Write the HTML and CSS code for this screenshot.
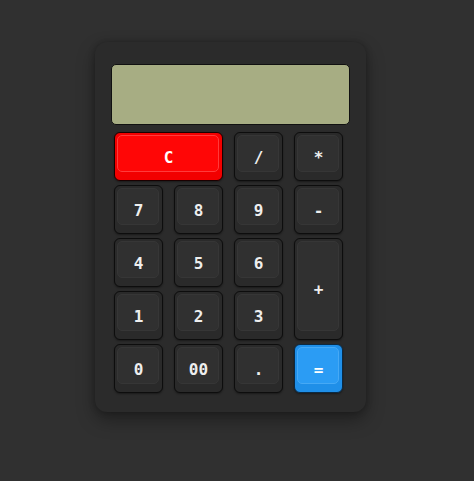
FILE: index.html
```html
<!DOCTYPE html>
<html lang="en">
	<head>
		<meta charset="UTF-8">
		<title>Calculator</title>
		<link rel="stylesheet" href="styles.css">
	</head>
	<body>

		<div class="calc">
			<div class="screen"></div>
			<div class="keys">
				<button class="key red wide">C</button>
				<button class="key">/</button>
				<button class="key">*</button>
				<button class="key">7</button>
				<button class="key">8</button>
				<button class="key">9</button>
				<button class="key">-</button>
				<button class="key">4</button>
				<button class="key">5</button>
				<button class="key">6</button>
				<button class="key tall">+</button>
				<button class="key">1</button>
				<button class="key">2</button>
				<button class="key">3</button>
				<button class="key">0</button>
				<button class="key">00</button>
				<button class="key">.</button>
				<button class="key blue">=</button>
			</div>
		</div>

	</body>
</html>
```

FILE: styles.css
```css
* {
	margin: 0;
	padding: 0;
	box-sizing: border-box;
}

body {
	background: #303030;
	height: 481px;
	overflow: hidden;
}

.calc {
	width: 271px;
	margin: 42px 0 0 95px;
	padding: 22px 16px 19px 16px;
	background: #2b2b2b;
	border-radius: 12px;
	box-shadow: 0 8px 18px rgba(0, 0, 0, 0.35), 0 0 6px rgba(0, 0, 0, 0.25);
}

.screen {
	height: 61px;
	background: #a7ad83;
	border: 1px solid #111;
	border-radius: 5px;
}

.keys {
	display: grid;
	grid-template-columns: repeat(4, 49px);
	grid-auto-rows: 49px;
	column-gap: 11px;
	row-gap: 4px;
	margin: 7px 0 0 3px;
}

.key {
	position: relative;
	isolation: isolate;
	display: flex;
	align-items: center;
	justify-content: center;
	padding-top: 1px;
	background: #2a2a2a;
	border: 1px solid #0d0d0d;
	border-radius: 6px;
	color: #eee;
	font-family: "DejaVu Sans Mono", "Liberation Mono", monospace;
	font-size: 16px;
	font-weight: bold;
	box-shadow: 0 1px 2px rgba(0, 0, 0, 0.4);
}

/* the raised face of the key cap, kept under the label */
.key::before {
	content: "";
	position: absolute;
	z-index: -1;
	top: 2px;
	left: 2px;
	right: 3px;
	bottom: 8px;
	background: #303030;
	border: 1px solid #363636;
	border-radius: 5px;
}

.key.wide {
	grid-column: span 2;
}

.key.tall {
	grid-row: span 2;
}

.key.red {
	background: #f20000;
	border-color: #1a0000;
	color: #fff;
}

.key.red::before {
	background: #ff0606;
	border-color: #ff3b3b;
}

.key.blue {
	background: #1f8fe8;
	border-color: #0b2a44;
	color: #fff;
}

.key.blue::before {
	background: #2b9cf4;
	border-color: #46a9f5;
}
```
